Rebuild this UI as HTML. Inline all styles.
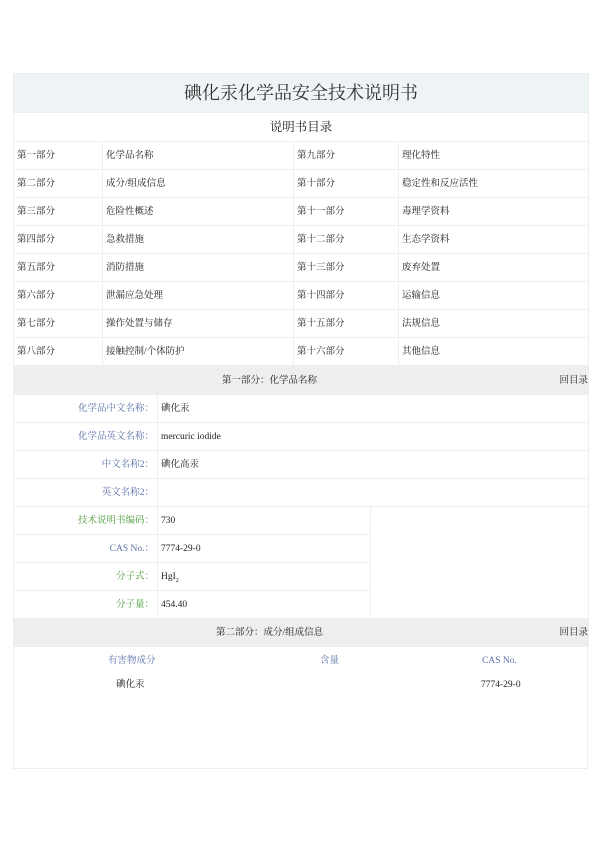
<!DOCTYPE html>
<html><head><meta charset="utf-8"><style>
body{margin:0;background:#fff;font-family:"Liberation Serif","Noto Serif CJK SC",serif;font-size:9.5px;color:#222}
.w{position:absolute;left:13px;top:73px;width:575px}
table{border-collapse:collapse;width:575px;table-layout:fixed}
td{border:1px solid #eeeeee;padding:0 3px;height:27px;line-height:12px}
.t{background:#eef3f6;height:38px;text-align:center;font-size:18px;color:#333;line-height:20px}
.h{text-align:center;font-size:12.5px;height:28px}
.g td{background:#eeeeee}
.lb{text-align:right;color:#5a6fa8;padding-right:3px}
.gr{color:#4a9a3a}
.c{text-align:center}
.s{position:absolute;line-height:12px}
</style></head><body><div class="w">
<table>
<col style="width:89px"><col style="width:191px"><col style="width:105px"><col style="width:190px">
<tr><td colspan="4" class="t">碘化汞化学品安全技术说明书</td></tr>
<tr><td colspan="4" class="h">说明书目录</td></tr>
<tr><td>第一部分</td><td>化学品名称</td><td>第九部分</td><td>理化特性</td></tr>
<tr><td>第二部分</td><td>成分/组成信息</td><td>第十部分</td><td>稳定性和反应活性</td></tr>
<tr><td>第三部分</td><td>危险性概述</td><td>第十一部分</td><td>毒理学资料</td></tr>
<tr><td>第四部分</td><td>急救措施</td><td>第十二部分</td><td>生态学资料</td></tr>
<tr><td>第五部分</td><td>消防措施</td><td>第十三部分</td><td>废弃处置</td></tr>
<tr><td>第六部分</td><td>泄漏应急处理</td><td>第十四部分</td><td>运输信息</td></tr>
<tr><td>第七部分</td><td>操作处置与储存</td><td>第十五部分</td><td>法规信息</td></tr>
<tr><td>第八部分</td><td>接触控制/个体防护</td><td>第十六部分</td><td>其他信息</td></tr>
</table>
<table>
<col style="width:144px"><col style="width:213px"><col style="width:155px"><col style="width:63px">
<tr class="g"><td colspan="3" class="c">第一部分：化学品名称</td><td style="text-align:right;padding-right:0">回目录</td></tr>
<tr><td class="lb">化学品中文名称：</td><td colspan="3">碘化汞</td></tr>
<tr><td class="lb">化学品英文名称：</td><td colspan="3">mercuric iodide</td></tr>
<tr><td class="lb">中文名称2：</td><td colspan="3">碘化高汞</td></tr>
<tr><td class="lb">英文名称2：</td><td colspan="3"></td></tr>
<tr><td class="lb gr">技术说明书编码：</td><td>730</td><td colspan="2" rowspan="4"></td></tr>
<tr><td class="lb">CAS No.：</td><td>7774-29-0</td></tr>
<tr><td class="lb gr">分子式：</td><td>HgI<sub style="font-size:6px;line-height:0">2</sub></td></tr>
<tr><td class="lb gr">分子量：</td><td>454.40</td></tr>
<tr class="g"><td colspan="3" class="c">第二部分：成分/组成信息</td><td style="text-align:right;padding-right:0">回目录</td></tr>
</table>
<div style="height:121px;border:1px solid #eeeeee;border-top:none;position:relative">
<span class="s" style="left:94px;top:8px;color:#5a6fa8">有害物成分</span>
<span class="s" style="left:306px;top:8px;color:#5a6fa8">含量</span>
<span class="s" style="left:468px;top:8px;color:#5a6fa8">CAS No.</span>
<span class="s" style="left:102px;top:32px">碘化汞</span>
<span class="s" style="left:467px;top:32px">7774-29-0</span>
</div>
</div></body></html>
